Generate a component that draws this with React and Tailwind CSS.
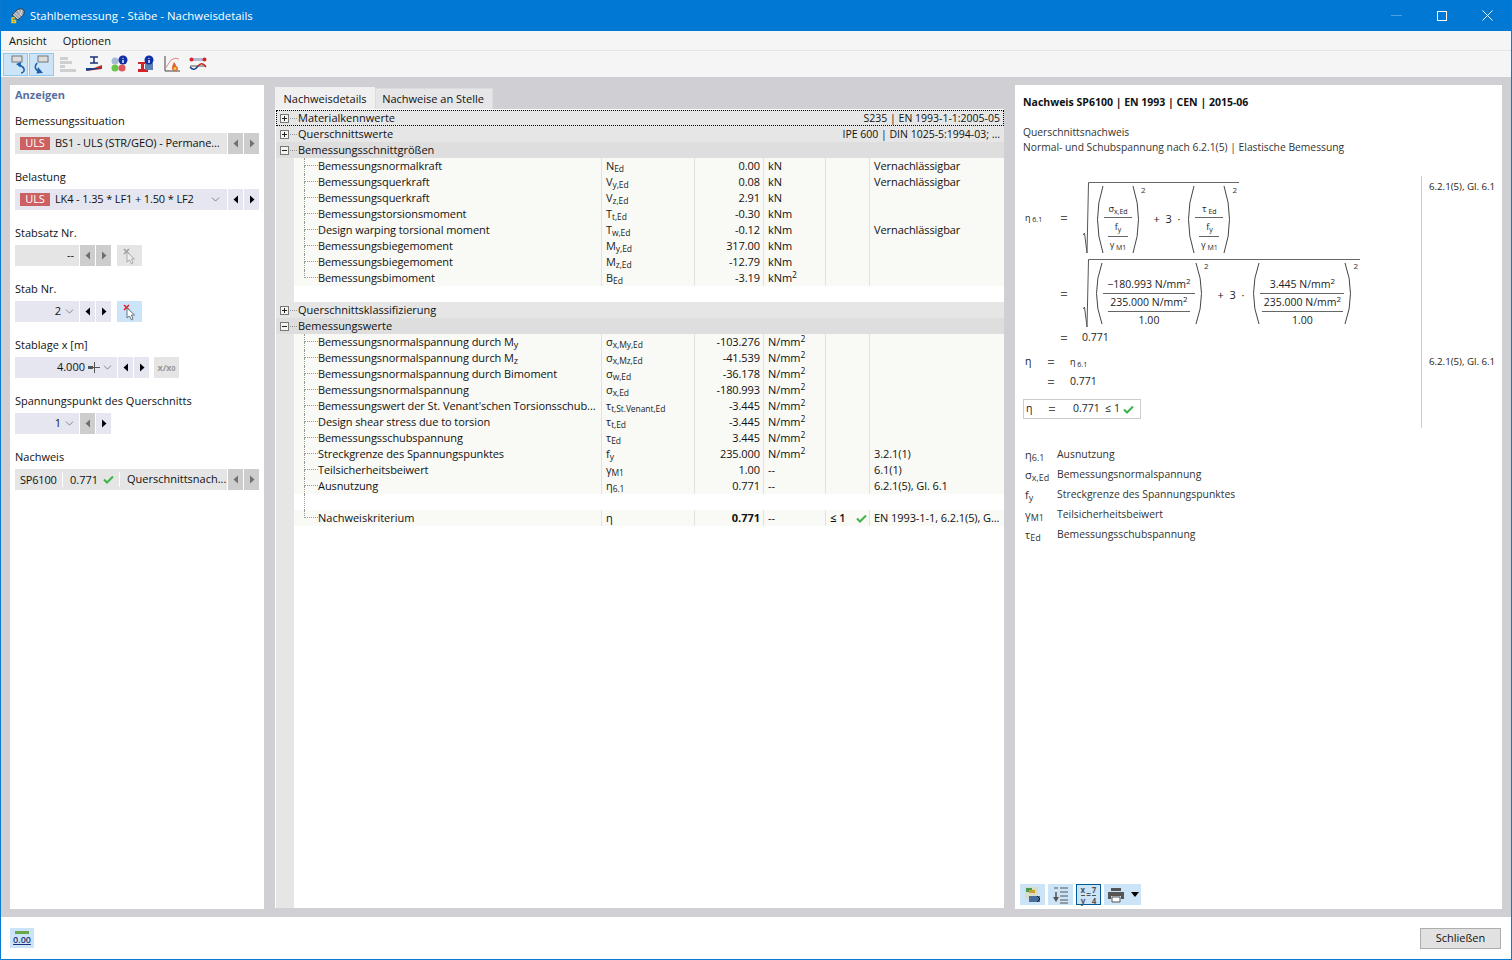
import { ChevronDown } from 'lucide-react';

const font = "[font-family:'Open_Sans',sans-serif]";

const Check = ({ className = '' }) => (
  <svg width="11" height="9" viewBox="0 0 11 9" className={className}>
    <path d="M1 4.5 L4 7.5 L10 1.5" fill="none" stroke="#3cb44b" strokeWidth="2" />
  </svg>
);

const Arrow = ({ dir, off }) => (
  <svg width="6" height="9" viewBox="0 0 6 9">
    <path d={dir === 'l' ? 'M5 0.5 V8.5 L0.5 4.5 Z' : 'M1 0.5 V8.5 L5.5 4.5 Z'} fill={off ? '#6f6f6f' : '#000'} />
  </svg>
);

const Nav = ({ dir, off }) => (
  <div className={`flex h-full w-[15px] items-center justify-center ${off ? 'bg-[#cdcdcd]' : 'bg-[#e6e6f0]'}`}>
    <Arrow dir={dir} off={off} />
  </div>
);

const Chev = () => <ChevronDown size={13} strokeWidth={1} className="text-[#333]" />;

const Uls = () => <span className="mr-[5px] flex h-[13px] w-[30px] items-center justify-center bg-[#cd6161] text-[11px] text-white">ULS</span>;

const PickIcon = ({ active }) => (
  <div className={`ml-[5px] flex h-full w-[25px] items-center justify-center ${active ? 'bg-[#cce4f7]' : 'bg-[#e5e5e5]'}`}>
    <svg width="18" height="18" viewBox="0 0 18 18">
      <path d="M3 2 L8 7 M8 2 L3 7" stroke={active ? '#e0202a' : '#a0a0a0'} strokeWidth="1.6" />
      <path d="M6 5 L6 15 L8.5 13 L10.5 17 L12 16 L10.5 12 L13.5 12 Z" fill={active ? '#fff' : '#eee'} stroke={active ? '#6b7280' : '#aaa'} strokeWidth="1" />
    </svg>
  </div>
);

const Field = ({ label, children }) => (
  <div className="mt-[15px]">
    <div className="h-[16px] text-[11px] leading-[16px] text-[#111]">{label}</div>
    <div className="mt-[4px] flex h-[21px] gap-px">{children}</div>
  </div>
);

const Sidebar = () => (
  <div className="w-[254px] bg-white px-[5px] pt-[2px]">
    <div className="h-[16px] text-[11px] leading-[16px] font-bold text-[#5a70a0]">Anzeigen</div>
    <div className="mt-[-5px]">
      <Field label="Bemessungssituation">
        <div className="flex w-[212px] items-center bg-[#e5e5e5] pl-[5px] text-[11px] tracking-[-0.1px] text-[#111]">
          <Uls />
          <span className="whitespace-nowrap">BS1 - ULS (STR/GEO) - Permane...</span>
        </div>
        <Nav dir="l" off />
        <Nav dir="r" off />
      </Field>
      <Field label="Belastung">
        <div className="flex w-[212px] items-center justify-between bg-[#e6e6f0] px-[5px] text-[11px] tracking-[-0.13px] text-[#111]">
          <div className="flex items-center"><Uls /><span>LK4 - 1.35 * LF1 + 1.50 * LF2</span></div>
          <Chev />
        </div>
        <Nav dir="l" />
        <Nav dir="r" />
      </Field>
      <Field label="Stabsatz Nr.">
        <div className="flex w-[64px] items-center justify-end bg-[#e5e5e5] pr-[5px] text-[11px] text-[#111]">--</div>
        <Nav dir="l" off />
        <Nav dir="r" off />
        <PickIcon />
      </Field>
      <Field label="Stab Nr.">
        <div className="flex w-[64px] items-center justify-end gap-[2px] bg-[#e6e6f0] pr-[3px] text-[11px] text-[#111]">2 <Chev /></div>
        <Nav dir="l" />
        <Nav dir="r" />
        <PickIcon active />
      </Field>
      <Field label="Stablage x [m]">
        <div className="flex w-[102px] items-center justify-end bg-[#e6e6f0] pr-[3px] text-[11px] text-[#111]">
          <span>4.000</span>
          <svg width="13" height="11" viewBox="0 0 13 11" className="ml-[3px]">
            <path d="M0 4 H5 V7 H0 Z" fill="#555" />
            <path d="M6.5 0 V11 M5 5.5 H12" stroke="#555" strokeWidth="1" />
          </svg>
          <Chev />
        </div>
        <Nav dir="l" />
        <Nav dir="r" />
        <div className="ml-[4px] flex h-full w-[25px] items-center justify-center bg-[#e5e5e5] text-[9px] font-bold text-[#999]">x/x<sub className="text-[7px]">0</sub></div>
      </Field>
      <Field label="Spannungspunkt des Querschnitts">
        <div className="flex w-[64px] items-center justify-end gap-[2px] bg-[#e6e6f0] pr-[3px] text-[11px] text-[#111]">1 <Chev /></div>
        <Nav dir="l" off />
        <Nav dir="r" />
      </Field>
      <Field label="Nachweis">
        <div className="flex w-[212px] items-center bg-[#e5e5e5] text-[11px] text-[#111]">
          <span className="w-[48px] border-r border-white pl-[5px] leading-[15px] tracking-[-0.2px]">SP6100</span>
          <span className="flex w-[57px] items-center gap-[5px] border-r border-white pl-[7px] leading-[15px]">0.771 <Check /></span>
          <span className="pl-[7px] whitespace-nowrap">Querschnittsnach...</span>
        </div>
        <Nav dir="l" off />
        <Nav dir="r" off />
      </Field>
    </div>
  </div>
);

const Sym = ({ b, s }) => (
  <span className="text-[#222]">{b}<sub className="text-[8.5px]">{s}</sub></span>
);

const Nm2 = ({ u }) => <>{u}<sup className="text-[8.5px]">2</sup></>;

const forces = [
  ['Bemessungsnormalkraft', 'N', 'Ed', '0.00', 'kN', 'Vernachlässigbar'],
  ['Bemessungsquerkraft', 'V', 'y,Ed', '0.08', 'kN', 'Vernachlässigbar'],
  ['Bemessungsquerkraft', 'V', 'z,Ed', '2.91', 'kN', ''],
  ['Bemessungstorsionsmoment', 'T', 't,Ed', '-0.30', 'kNm', ''],
  ['Design warping torsional moment', 'T', 'w,Ed', '-0.12', 'kNm', 'Vernachlässigbar'],
  ['Bemessungsbiegemoment', 'M', 'y,Ed', '317.00', 'kNm', ''],
  ['Bemessungsbiegemoment', 'M', 'z,Ed', '-12.79', 'kNm', ''],
  ['Bemessungsbimoment', 'B', 'Ed', '-3.19', <Nm2 u="kNm" />, ''],
];

const values = [
  [<>Bemessungsnormalspannung durch M<sub className="text-[9px]">y</sub></>, 'σ', 'x,My,Ed', '-103.276', <Nm2 u="N/mm" />, ''],
  [<>Bemessungsnormalspannung durch M<sub className="text-[9px]">z</sub></>, 'σ', 'x,Mz,Ed', '-41.539', <Nm2 u="N/mm" />, ''],
  ['Bemessungsnormalspannung durch Bimoment', 'σ', 'w,Ed', '-36.178', <Nm2 u="N/mm" />, ''],
  ['Bemessungsnormalspannung', 'σ', 'x,Ed', '-180.993', <Nm2 u="N/mm" />, ''],
  ["Bemessungswert der St. Venant'schen Torsionsschub...", 'τ', 't,St.Venant,Ed', '-3.445', <Nm2 u="N/mm" />, ''],
  ['Design shear stress due to torsion', 'τ', 't,Ed', '-3.445', <Nm2 u="N/mm" />, ''],
  ['Bemessungsschubspannung', 'τ', 'Ed', '3.445', <Nm2 u="N/mm" />, ''],
  ['Streckgrenze des Spannungspunktes', 'f', 'y', '235.000', <Nm2 u="N/mm" />, '3.2.1(1)'],
  ['Teilsicherheitsbeiwert', 'γ', 'M1', '1.00', '--', '6.1(1)'],
  ['Ausnutzung', 'η', '6.1', '0.771', '--', '6.2.1(5), Gl. 6.1'],
];

const Head = ({ open, label, right, focus, dark }) => (
  <div className={`flex h-4 items-center text-[11px] leading-4 text-[#111] ${dark ? 'bg-[#dedede]' : 'bg-[#e6e6e6]'} ${focus ? 'outline outline-dotted outline-black -outline-offset-1' : ''}`}>
    <div className="flex h-full w-[22px] shrink-0 items-center pl-[4px]">
      <svg width="9" height="9" viewBox="0 0 9 9">
        <rect x="0.5" y="0.5" width="8" height="8" fill="#f4f4f4" stroke="#777" />
        <path d={open ? 'M2 4.5 H7' : 'M2 4.5 H7 M4.5 2 V7'} stroke="#222" />
      </svg>
      <div className="ml-px w-[7px] border-b border-dotted border-[#999]" />
    </div>
    <span className="flex-1">{label}</span>
    {right && <span className="pr-[4px] text-right text-[10.5px]">{right}</span>}
  </div>
);

const Tree = ({ last }) => (
  <div className="ml-[10px] h-4 w-[14px] shrink-0">
    <div className="h-[8px] border-b border-l border-dotted border-[#999]" />
    {!last && <div className="h-[8px] border-l border-dotted border-[#999]" />}
  </div>
);

const Gutter = () => <div className="h-4 w-[18px] shrink-0 bg-[#e6e6e6]" />;

const DataRow = ({ row, last }) => (
  <div className="flex h-4 text-[11px] leading-4 tracking-[-0.08px] text-[#111]">
    <Gutter />
    <div className="flex flex-1 bg-[#f9faf5]">
      <div className="flex w-[307px] shrink-0">
        <Tree last={last} />
        <span className="whitespace-nowrap">{row[0]}</span>
      </div>
      <div className="w-[93px] shrink-0 border-l border-[#e2e2e2] pl-[4px] whitespace-nowrap"><Sym b={row[1]} s={row[2]} /></div>
      <div className="w-[69px] shrink-0 border-l border-[#e2e2e2] pr-[3px] text-right">{row[3]}</div>
      <div className="w-[62px] shrink-0 border-l border-[#e2e2e2] pl-[4px]">{row[4]}</div>
      <div className="w-[44px] shrink-0 border-l border-[#e2e2e2]" />
      <div className="flex-1 border-l border-[#e2e2e2] pl-[4px]">{row[5]}</div>
    </div>
  </div>
);

const Blank = () => (
  <div className="flex h-4">
    <Gutter />
    <div className="flex-1 bg-white">
      <div className="ml-[10px] h-4 border-l border-dotted border-[#999]" />
    </div>
  </div>
);

const Details = () => (
  <div className="mb-px flex w-[729px] flex-col">
    <div className="flex h-[24px] pt-[2px] text-[11px] text-[#111]">
      <div className="flex w-[100px] items-center justify-center bg-[#f0f0f0] pt-[3px]">Nachweisdetails</div>
      <div className="mt-px flex w-[118px] items-center justify-center border border-b-0 border-[#dcdce0] bg-[#e6e6e8] pr-[2px]">Nachweise an Stelle</div>
    </div>
    <div className="flex flex-1 flex-col bg-white pt-[1px] pl-px">
      <Head label="Materialkennwerte" right="S235 | EN 1993-1-1:2005-05" focus />
      <Head label="Querschnittswerte" right="IPE 600 | DIN 1025-5:1994-03; ..." />
      <Head open dark label="Bemessungsschnittgrößen" />
      {forces.map((r, i) => <DataRow key={i} row={r} last={i === forces.length - 1} />)}
      <div className="flex h-4"><Gutter /></div>
      <Head label="Querschnittsklassifizierung" />
      <Head open dark label="Bemessungswerte" />
      {values.map((r, i) => <DataRow key={i} row={r} />)}
      <Blank />
      <div className="flex h-4 text-[11px] leading-4 text-[#111]">
        <Gutter />
        <div className="flex flex-1 bg-[#f9faf5]">
          <div className="flex w-[307px] shrink-0"><Tree last /><span>Nachweiskriterium</span></div>
          <div className="w-[93px] shrink-0 border-l border-[#e2e2e2] pl-[4px]">η</div>
          <div className="w-[69px] shrink-0 border-l border-[#e2e2e2] pr-[3px] text-right font-bold">0.771</div>
          <div className="w-[62px] shrink-0 border-l border-[#e2e2e2] pl-[4px]">--</div>
          <div className="flex w-[44px] shrink-0 items-center justify-between border-l border-[#e2e2e2] pr-[2px] pl-[4px] font-semibold">≤ 1 <Check /></div>
          <div className="flex-1 border-l border-[#e2e2e2] pl-[4px] tracking-[-0.08px] whitespace-nowrap">EN 1993-1-1, 6.2.1(5), G...</div>
        </div>
      </div>
      <div className="flex flex-1"><div className="w-[18px] bg-[#e6e6e6]" /></div>
    </div>
  </div>
);

const Paren = ({ h, right, className = '' }) => (
  <svg width="7" height={h} viewBox={`0 0 7 ${h}`} className={`shrink-0 ${className}`}>
    <path d={right ? `M1 0 Q12 ${h / 2} 1 ${h}` : `M6 0 Q-5 ${h / 2} 6 ${h}`} fill="none" stroke="#444" strokeWidth="1" />
  </svg>
);

const Root = ({ h, children }) => (
  <div className="flex">
    <svg width="6" height={h} viewBox={`0 0 6 ${h}`} className="shrink-0">
      <path d={`M0 ${h - 18} L1.5 ${h - 20} L4 ${h} L5.5 0.5 H6`} fill="none" stroke="#555" strokeWidth="1" />
    </svg>
    <div className="flex border-t border-[#666]">{children}</div>
  </div>
);

const Pow = () => <span className="mb-auto pl-[2px] text-[8px] leading-[10px] text-[#333]">2</span>;

const Sm = ({ b, s }) => <span className="text-[9px] leading-[12px]">{b}<sub className="text-[7px]">{s}</sub></span>;

const NestFrac = ({ top }) => (
  <div className="flex w-[28px] flex-col items-center">
    <div className="flex h-[33px] w-full items-end justify-center border-b border-[#666] pb-[2px]">{top}</div>
    <div className="flex h-[19px] w-[20px] items-center justify-center border-b border-[#666]"><Sm b="f" s="y" /></div>
    <div className="flex h-[16px] items-center"><Sm b="γ" s=" M1" /></div>
  </div>
);

const NumFrac = ({ top, w }) => (
  <div className={`flex flex-col items-center text-[10.5px] ${w}`}>
    <div className="flex h-[33px] w-full items-end justify-center border-b border-[#666] whitespace-nowrap">{top}</div>
    <div className="flex h-[18px] items-center justify-center border-b border-[#666] px-[2px] whitespace-nowrap"><span>235.000 N/mm<sup className="text-[8px]">2</sup></span></div>
    <div className="flex h-[17px] items-center pt-px">1.00</div>
  </div>
);

const Eq = () => <span className="w-[20px] text-center text-[13px] leading-[14px] text-[#555]">=</span>;

const Formula = () => (
  <div className="flex h-[252px] text-[#222]">
    <div className="flex w-[399px] flex-col border-r border-[#ccc] pt-[6px] text-[10.5px]">
      <div className="flex items-center">
        <span className="w-[31px] pl-[2px]"><Sm b="η" s=" 6.1" /></span>
        <Eq />
        <span className="w-[9px]" />
        <Root h={71}>
          <div className="flex items-center pt-[2px] pr-[2px] pl-[8px]">
            <Paren h={67} />
            <NestFrac top={<Sm b="σ" s="x,Ed" />} />
            <Paren h={67} right />
            <Pow />
            <span className="px-[8px] text-[11px] whitespace-nowrap">+ &nbsp;3 &nbsp;·</span>
            <Paren h={67} />
            <NestFrac top={<Sm b="τ" s=" Ed" />} />
            <Paren h={67} right />
            <Pow />
          </div>
        </Root>
      </div>
      <div className="mt-[6px] flex items-center">
        <span className="w-[31px]" />
        <Eq />
        <span className="w-[9px]" />
        <Root h={68}>
          <div className="flex items-start pt-[1px] pr-[2px] pl-[7px]">
            <Paren h={61} className="mt-[2px]" />
            <NumFrac w="w-[92px]" top={<span>−180.993 N/mm<sup className="text-[8px]">2</sup></span>} />
            <Paren h={61} right className="mt-[2px]" />
            <Pow />
            <span className="mt-[26px] px-[9px] text-[11px] whitespace-nowrap">+ &nbsp;3 &nbsp;·</span>
            <Paren h={61} className="mt-[2px]" />
            <NumFrac w="w-[84px]" top={<span>3.445 N/mm<sup className="text-[8px]">2</sup></span>} />
            <Paren h={61} right className="mt-[2px]" />
            <Pow />
          </div>
        </Root>
      </div>
      <div className="mt-px flex h-[16px] items-center">
        <span className="w-[31px]" />
        <Eq />
        <span className="pl-[8px]">0.771</span>
      </div>
      <div className="mt-[8px] flex h-[16px] items-center">
        <span className="w-[18px] pl-[2px]">η</span>
        <Eq />
        <span className="pl-[9px]"><Sm b="η" s=" 6.1" /></span>
      </div>
      <div className="mt-[4px] flex h-[16px] items-center">
        <span className="w-[18px]" />
        <Eq />
        <span className="pl-[9px]">0.771</span>
      </div>
      <div className="mt-[9px] flex h-[20px] w-[118px] items-center border border-[#ccc]">
        <span className="w-[18px] pl-[2px]">η</span>
        <Eq />
        <span className="pl-[11px] whitespace-nowrap">0.771 &nbsp;≤ 1</span>
        <Check className="ml-[3px]" />
      </div>
    </div>
    <div className="flex flex-col pl-[7px] text-[9.7px] leading-[12px]">
      <span className="mt-[5px]">6.2.1(5), Gl. 6.1</span>
      <span className="mt-[163px]">6.2.1(5), Gl. 6.1</span>
    </div>
  </div>
);

const legend = [
  ['η', '6.1', 'Ausnutzung'],
  ['σ', 'x,Ed', 'Bemessungsnormalspannung'],
  ['f', 'y', 'Streckgrenze des Spannungspunktes'],
  ['γ', 'M1', 'Teilsicherheitsbeiwert'],
  ['τ', 'Ed', 'Bemessungsschubspannung'],
];

const IconBtn = ({ w = 'w-[25px]', active, children }) => (
  <div className={`flex h-[21px] items-center justify-center ${w} ${active ? 'border-[1.5px] border-[#005a9e] bg-[#cce4f7]' : 'bg-[#cce4f7]'}`}>{children}</div>
);

const Report = () => (
  <div className="flex w-[487px] flex-col bg-white pt-[9px] pl-[8px]">
    <div className="text-[10.5px] leading-4 font-bold text-[#111]">Nachweis SP6100 | EN 1993 | CEN | 2015-06</div>
    <div className="mt-[15px] text-[10.3px] leading-[15px] text-[#333]">
      <div>Querschnittsnachweis</div>
      <div>Normal- und Schubspannung nach 6.2.1(5) | Elastische Bemessung</div>
    </div>
    <div className="mt-[21px]"><Formula /></div>
    <div className="mt-[17px] flex flex-col text-[10.4px] text-[#333]">
      {legend.map(([b, s, t]) => (
        <div key={t} className="flex h-[20px] items-center">
          <span className="w-[34px] pl-[2px] text-[11px]">{b}<sub className="text-[9px]">{s}</sub></span>
          <span>{t}</span>
        </div>
      ))}
    </div>
    <div className="mt-auto mb-[4px] -ml-[3px] flex gap-[3px]">
      <IconBtn>
        <svg width="18" height="18" viewBox="0 0 18 18">
          <rect x="1" y="1" width="13" height="12" fill="#d8dcc8" />
          <path d="M2 2 H8 V6 H2 Z" fill="#4a9a4a" />
          <path d="M5 4 H11 V7 H5 Z" fill="#c9a227" />
          <rect x="5" y="10" width="11" height="6" fill="#4a6e9c" />
          <path d="M13 10 L16 13 L13 16" fill="none" stroke="#123" strokeWidth="1" />
        </svg>
      </IconBtn>
      <IconBtn>
        <svg width="16" height="18" viewBox="0 0 16 18">
          <path d="M7 2 H15 M7 6 H15 M7 10 H15 M7 14 H15 M7 17 H15 M1 2 H5" stroke="#555" strokeWidth="1" />
          <path d="M3 6 V12" stroke="#555" strokeWidth="1.5" />
          <path d="M0 11 H6 L3 16 Z" fill="#555" />
        </svg>
      </IconBtn>
      <IconBtn active>
        <span className="flex items-center text-[8px] leading-[9px] font-bold text-[#555]">
          <span className="flex flex-col items-center"><span className="border-b border-[#555] pb-px">x</span><span>y</span></span>
          <span className="mx-px">=</span>
          <span className="flex flex-col items-center"><span className="border-b border-[#555] pb-px">7</span><span>4</span></span>
        </span>
      </IconBtn>
      <IconBtn w="w-[37px]">
        <svg width="18" height="16" viewBox="0 0 18 16">
          <path d="M4 1 H14 V4 H4 Z" fill="#555" />
          <path d="M1 5 H17 V12 H14 V9 H4 V12 H1 Z" fill="#555" />
          <path d="M5 10 H13 V15 H5 Z" fill="#fff" stroke="#555" />
        </svg>
        <svg width="8" height="5" viewBox="0 0 8 5" className="ml-[6px]"><path d="M0 0 H8 L4 5 Z" fill="#000" /></svg>
      </IconBtn>
    </div>
  </div>
);

const tools = [
  <svg width="20" height="20" viewBox="0 0 20 20" key="1">
    <rect x="6" y="2" width="10" height="6" fill="#ddd" stroke="#777" />
    <path d="M13 11 Q19 13 18 17 Q17 19 15 19" fill="none" stroke="#1d5fa8" strokeWidth="1.6" />
    <path d="M10 10 L15 8 L14.5 13.5 Z" fill="#1d5fa8" />
  </svg>,
  <svg width="20" height="20" viewBox="0 0 20 20" key="2">
    <rect x="6" y="2" width="10" height="6" fill="#ddd" stroke="#777" />
    <path d="M5 9 Q1 14 6 17" fill="none" stroke="#1d5fa8" strokeWidth="1.6" />
    <path d="M6 13 L11 19 L4.5 19.5 Z" fill="#1d5fa8" />
  </svg>,
  <svg width="18" height="18" viewBox="0 0 18 18" key="3">
    <path d="M1 2 H9 V5 H1 Z M1 6 H13 V9 H1 Z M1 10 H6 V13 H1 Z M1 14 H17 V17 H1 Z" fill="#cfcfcf" />
  </svg>,
  <svg width="18" height="18" viewBox="0 0 18 18" key="4">
    <path d="M5 2 H13 M9 2 V8 M5 8 H13" stroke="#1c2f7a" strokeWidth="1.5" />
    <path d="M1 16 L17 10 V14 Z" fill="#c0271f" />
    <path d="M1 13 H17 L1 16 Z" fill="#1c3f8a" />
  </svg>,
  <svg width="18" height="18" viewBox="0 0 18 18" key="5">
    <circle cx="4" cy="6" r="3.5" fill="#a9b9d8" />
    <circle cx="4" cy="13" r="3.5" fill="#68c548" />
    <circle cx="11" cy="13" r="3.5" fill="#e0565c" />
    <circle cx="12" cy="5" r="4.5" fill="#0e2fa8" />
    <path d="M12 3 V3.8 M12 5 V8" stroke="#fff" strokeWidth="1.4" />
  </svg>,
  <svg width="18" height="18" viewBox="0 0 18 18" key="6">
    <path d="M1 7 H11 V9 H7 V14 H11 V17 H1 V14 H4 V9 H1 Z" fill="#d2222a" />
    <path d="M8 8 L16 8 V15 L8 15 Z" fill="#5b7fb0" />
    <circle cx="12" cy="5" r="4.5" fill="#0e2fa8" />
    <path d="M12 3 V3.8 M12 5 V8" stroke="#fff" strokeWidth="1.4" />
  </svg>,
  <svg width="18" height="18" viewBox="0 0 18 18" key="7">
    <path d="M2 1 V16 H17" fill="none" stroke="#444" strokeWidth="1" />
    <path d="M2 14 L8 5 Q12 2 16 4" fill="none" stroke="#e58a8a" strokeWidth="1" />
    <path d="M11 7 Q9 11 9 13 Q9 16 12 16 Q15 16 15 13 Q14 11 13 11 Q13 9 11 7 Z" fill="#e0602a" />
    <circle cx="12" cy="13.5" r="1.5" fill="#f5d04a" />
  </svg>,
  <svg width="18" height="18" viewBox="0 0 18 18" key="8">
    <rect x="2" y="3" width="14" height="3" fill="#aebbd0" />
    <circle cx="2.5" cy="4.5" r="2" fill="#d2222a" />
    <circle cx="15.5" cy="4.5" r="2" fill="#d2222a" />
    <path d="M1 11 H17" stroke="#555" />
    <path d="M1 12 Q5 17 9 11" fill="none" stroke="#1c3f8a" strokeWidth="1.4" />
    <path d="M9 11 Q13 6 17 12" fill="none" stroke="#c0271f" strokeWidth="1.4" />
  </svg>,
];

export default function App() {
  return (
    <div className={`flex h-[960px] w-[1512px] flex-col overflow-hidden border-x border-b border-[#0a7ad1] bg-white ${font}`}>
      {/* Title bar */}
      <div className="flex h-[31px] shrink-0 items-center bg-[#0078d4] pl-[8px] text-white">
        <svg width="16" height="16" viewBox="0 0 16 16">
          <path d="M3 7 L9 1 H14 Q16 3 15 6 L9 12 Z" fill="#9aa3ad" stroke="#3c4148" />
          <path d="M6 4.5 L11 9.5 M9 2 L13 8 M4.5 6 L9 11 M12 1.5 Q14 4 11 7" fill="none" stroke="#e6e8ea" strokeWidth="0.8" />
          <path d="M6 10 H3 V14.5 H6.5 V12.5 H3" fill="none" stroke="#f3c623" strokeWidth="1.4" />
        </svg>
        <span className="ml-[5px] text-[11.4px]">Stahlbemessung - Stäbe - Nachweisdetails</span>
        <div className="ml-auto flex items-center">
          <div className="w-[11px] border-b border-[#4aa0e2]" />
          <div className="ml-[35px] h-[10px] w-[10px] border border-white" />
          <svg width="11" height="11" viewBox="0 0 11 11" className="ml-[35px] mr-[18px]">
            <path d="M0.5 0.5 L10.5 10.5 M10.5 0.5 L0.5 10.5" stroke="#fff" />
          </svg>
        </div>
      </div>

      {/* Menu */}
      <div className="flex h-[19px] shrink-0 items-center gap-[16px] bg-[#f5f5f5] pt-[2px] pl-[8px] text-[11px] text-[#111]">
        <span>Ansicht</span>
        <span>Optionen</span>
      </div>

      {/* Toolbar */}
      <div className="flex h-[27px] shrink-0 items-center border-t border-[#e4e4e4] bg-[#f5f5f5] pl-[2px]">
        {tools.map((icon, i) => (
          <div key={i} className={`flex h-[23px] items-center justify-center ${i < 2 ? 'mr-[1px] w-[25px] border border-[#90c8f0] bg-[#cce4f7]' : 'w-[26px]'}`}>{icon}</div>
        ))}
      </div>

      {/* Main */}
      <div className="flex min-h-0 flex-1 gap-[11px] bg-[#d0cfd4] px-[9px] py-[8px]">
        <Sidebar />
        <Details />
        <Report />
      </div>

      {/* Footer */}
      <div className="flex h-[42px] shrink-0 items-center justify-between bg-white pr-[10px] pl-[9px]">
        <div className="flex h-[20px] w-[24px] flex-col items-center bg-[#cce4f7] text-[9px] leading-[10px] font-semibold text-[#1c2f7a]">
          <div className="mt-[3px] mb-[1px] h-[3px] w-[14px] bg-[#68a848]" />
          <span className="underline">0.00</span>
        </div>
        <button className="h-[21px] w-[81px] border border-[#adadad] bg-[#e1e1e1] text-[11px] text-[#111]">Schließen</button>
      </div>
    </div>
  );
}
